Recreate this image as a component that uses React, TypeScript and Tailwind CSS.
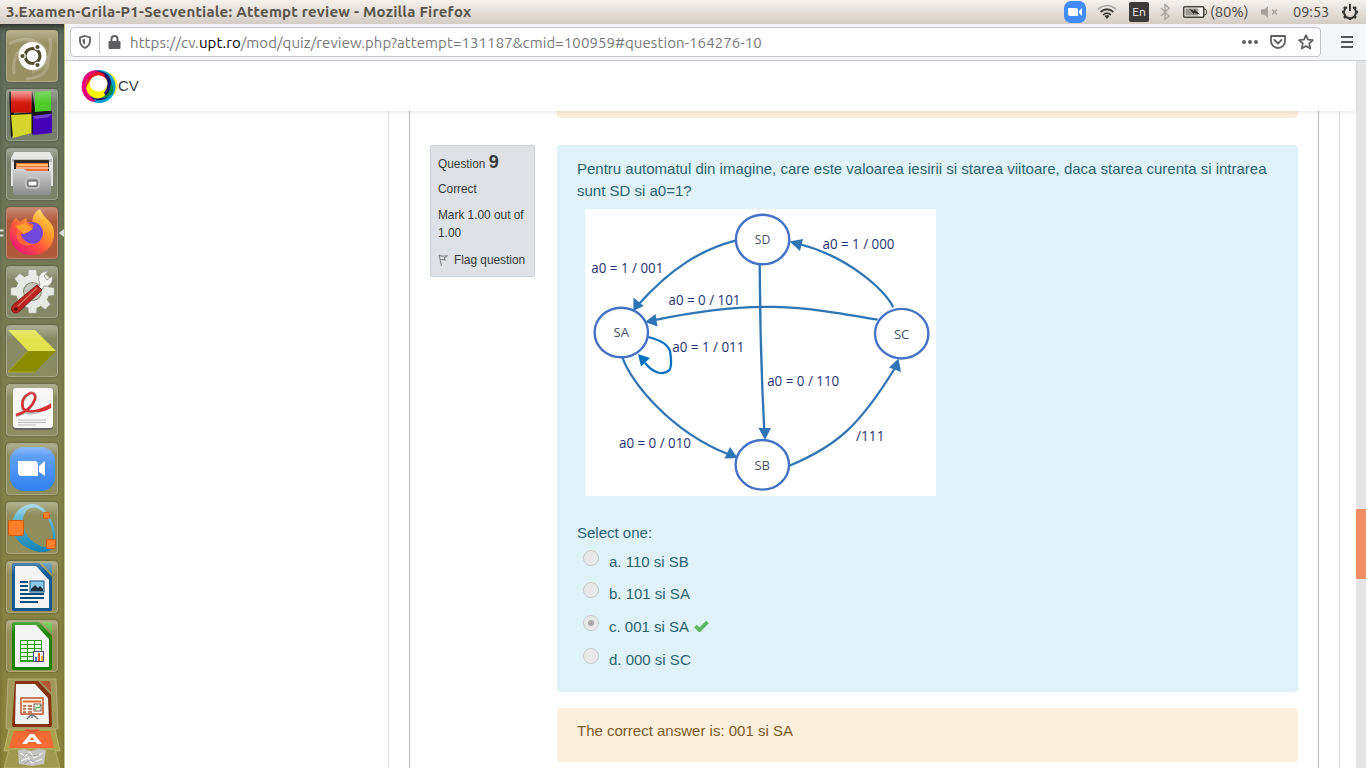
import type { ReactNode } from 'react';

const UBUNTU = "font-['Ubuntu','Noto_Sans',sans-serif]";

function Tile({ children, bg = 'bg-white/10' }: { children: ReactNode; bg?: string }) {
  return (
    <div className={`h-[52px] w-[52px] shrink-0 rounded-[4px] border border-white/25 shadow-[0_0_2px_rgba(0,0,0,0.5)] ${bg}`}>
      <svg className="-m-px block" width="52" height="52" viewBox="0 0 52 52">
        {children}
        <rect x="1" y="1" width="50" height="13" rx="3" fill="url(#gloss)" />
      </svg>
    </div>
  );
}

function Doc({ color, light, children }: { color: string; light: string; children: ReactNode }) {
  return (
    <>
      <path d="M8 2H33L46 16V48Q46 50 44 50H8Q6 50 6 48V4Q6 2 8 2Z" fill={color} />
      <path d="M9 5H30L43 19V47H9Z" fill="#f3f3f3" />
      <path d="M36 2H44Q46 2 46 4V13Z" fill={light} opacity=".85" />
      {children}
    </>
  );
}

function Launcher() {
  return (
    <aside className="relative flex w-[65px] shrink-0 flex-col items-center gap-[7px] overflow-hidden border-r border-[#c6c688] bg-linear-to-b from-[#5f6b5c] via-[#7f8050] to-[#8c8438] pt-[6px] pr-0 shadow-[inset_0_6px_6px_-3px_rgba(20,20,10,0.7)]">
      <svg width="0" height="0" className="absolute">
        <defs>
          <linearGradient id="gloss" x1="0" y1="0" x2="0" y2="1"><stop offset="0" stopColor="#fff" stopOpacity=".3" /><stop offset="1" stopColor="#fff" stopOpacity="0" /></linearGradient>
          <linearGradient id="steel" x1="0" y1="0" x2="0" y2="1"><stop offset="0" stopColor="#d2d2d2" /><stop offset="1" stopColor="#8d8d8d" /></linearGradient>
          <linearGradient id="fire" x1="1" y1="0" x2=".2" y2="1"><stop offset="0" stopColor="#fff14d" /><stop offset=".4" stopColor="#ff9a2b" /><stop offset=".7" stopColor="#ff4a3f" /><stop offset="1" stopColor="#e8147e" /></linearGradient>
          <linearGradient id="blue" x1="0" y1="0" x2="0" y2="1"><stop offset="0" stopColor="#6aa7f8" /><stop offset="1" stopColor="#3080f2" /></linearGradient>
          <linearGradient id="cyan" x1="0" y1="0" x2="0" y2="1"><stop offset="0" stopColor="#8fd0e0" /><stop offset="1" stopColor="#0d82b5" /></linearGradient>
          <linearGradient id="red" x1="0" y1="0" x2="0" y2="1"><stop offset="0" stopColor="#ef7f77" /><stop offset=".5" stopColor="#d81d12" /><stop offset="1" stopColor="#c81006" /></linearGradient>
        </defs>
      </svg>
      <Tile bg="bg-[#989163]">
        <g fill="none" stroke="#fff" opacity=".2" strokeWidth="3"><path d="M3 14Q25 2 40 20M8 44Q5 20 26 12M44 8Q48 36 26 42M20 49Q45 48 42 25" /></g>
        <circle cx="26.500" cy="26" r="14" fill="#fff" />
        <circle cx="26.500" cy="26" r="7.500" fill="none" stroke="#4f4b2b" strokeWidth="3.200" />
        <g fill="#4f4b2b" stroke="#fff" strokeWidth="1.200"><circle cx="16.500" cy="26" r="2.700" /><circle cx="31.500" cy="17" r="2.700" /><circle cx="31.500" cy="35" r="2.700" /></g>
      </Tile>
      <Tile>
        <path d="M3 3L8 2V45L5 49ZM26 2L30 25L25 26ZM5 25L28 23V28L6 29ZM25 22L46 22V27L28 30V46L25 44Z" fill="#171513" />
        <path d="M5 2H25.500V23.500H5Z" fill="url(#red)" /><path d="M29 3L45 2V21.500L29 23Z" fill="#4dcc2a" />
        <path d="M5 26L25.500 25V44L7 49Z" fill="#d5d52c" /><path d="M27 27L46 25V44L27 46Z" fill="#4500b5" /><path d="M27 27L46 24.500L43 28L29 30Z" fill="#7046cf" />
      </Tile>
      <Tile>
        <path d="M8 4H44L47 10V38H5V10Z" fill="#e3e3e1" /><path d="M6 11H46V14H6Z" fill="#b9b9b7" />
        <path d="M8 12H43V24H8Z" fill="#2c2826" /><path d="M10 15H42V24H10Z" fill="#ed7437" /><path d="M11 17H42" stroke="#ffd77b" strokeWidth="1.500" fill="none" /><path d="M10 20H43" stroke="#ffefdb" />
        <path d="M7 21H18L21 23H45V44Q45 47 42 47H10Q7 47 7 44Z" fill="url(#steel)" />
        <rect x="20" y="30" width="13" height="10" rx="2" fill="#999" stroke="#ddd" /><rect x="22" y="33" width="9" height="5" rx="1" fill="#fff" stroke="#555" />
      </Tile>
      <Tile bg="bg-[#b05a3c]">
        <path d="M26 48C13 48 4 39 4 27C4 20 6 14 10 11L14 15L20 11L21 15H26Q27 5 34 2Q37 9 43 14Q49 20 48 29C47 41 37 48 26 48Z" fill="url(#fire)" />
        <circle cx="26" cy="26" r="11" fill="#7049dc" /><path d="M13 18Q22 14 28 18L26 22Q22 27 14 27Q18 36 27 37Q20 41 14 36Q7 29 13 18Z" fill="#ff643b" /><path d="M9 19L20 16L27 22L18 27Z" fill="#ffa02d" />
      </Tile>
      <Tile>
        <g fill="#e7e9e5" stroke="#b8bcb5" strokeWidth=".5">
          {[0, 45, 90, 135, 180, 225, 270, 315].map((a) => <path key={a} d="M22 11L23 4H30L31 11Z" transform={`rotate(${a} 26.5 25.5)`} />)}
        </g>
        <circle cx="26.500" cy="25.500" r="13" fill="none" stroke="#e7e9e5" strokeWidth="7" />
        <circle cx="26.500" cy="25.500" r="8.500" fill="#c1c5bd" />
        <path d="M32 23L34 18Q30 10 37 6L42 5L38 10L41 14L46 10Q48 17 42 20L38 20L35 26Z" fill="#f4f4f2" stroke="#8b8d89" strokeWidth=".8" />
        <path d="M31 19L36 24L14 45Q9 49 6 45Q4 42 8 38Z" fill="#b82621" stroke="#771413" strokeWidth=".8" /><path d="M31 22L12 40" stroke="#df6c61" strokeWidth="1.500" /><circle cx="10" cy="43" r="1.800" fill="#5c1110" />
      </Tile>
      <Tile>
        <path d="M2 5H29L50 26H22Z" fill="#e2e24d" /><path d="M22 26H50L29 47H2Z" fill="#8c8c00" /><path d="M22 26L2 47H29" fill="none" stroke="#b3b31c" strokeWidth=".7" />
      </Tile>
      <Tile>
        <rect x="7" y="4" width="40" height="42" rx="3" fill="#666" /><rect x="7" y="4" width="40" height="40" rx="3" fill="#f7f7f7" />
        <path d="M10 32Q23 28 29 16Q31 8 24 9Q14 15 17 26Q23 34 45 22" fill="none" stroke="#b9bcc0" strokeWidth="3" /><path d="M10 31Q25 27 29 15Q30 8 24 9Q14 14 17 24Q23 32 45 21" fill="none" stroke="#d92d31" strokeWidth="2.400" /><path d="M25 27Q35 28 45 19V24Q35 30 25 27Z" fill="#d92d31" />
        <path d="M12 36H40M12 38.500H40M12 41H30" stroke="#bbb" strokeWidth="1" />
      </Tile>
      <Tile>
        <rect x="4" y="4" width="45" height="44" rx="14" fill="url(#blue)" /><path d="M12 18H28Q32 18 32 22V33H16Q12 33 12 29ZM33 23L39 18V33L33 29Z" fill="#fff" />
      </Tile>
      <Tile>
        <path d="M6 22C8 8 18 2 28 2C42 4 52 26 49 42C46 52 34 51 26 48C14 43 5 34 6 22ZM17 20C17 32 28 44 40 45C45 45 48 38 46.500 31C44 16 36 6 28 5.500C21 5.500 17 11 17 20Z" fillRule="evenodd" fill="url(#cyan)" />
        <g fill="#ff7f2a" stroke="#d85505"><rect x="2.500" y="18.500" width="15" height="15" rx="1.500" /><rect x="37.500" y="10.500" width="6" height="6" rx="1" /><rect x="40.500" y="37.500" width="9" height="9" rx="1" /></g>
      </Tile>
      <Tile>
        <Doc color="#0b5790" light="#3284c0"><path d="M14 21H22M14 25H22M14 29H22M14 33H38M14 37H38M14 41H32" stroke="#064c7d" strokeWidth="1.800" /><rect x="24" y="20" width="14" height="11" fill="#8acbed" stroke="#185274" /><path d="M25 30V28L29 24L32 27L34 25L37 28V30Z" fill="#22313d" /></Doc>
      </Tile>
      <Tile>
        <Doc color="#158400" light="#4fc52f"><path d="M14 20H36V42H14Z" fill="#2c9d18" /><g fill="#e5f7e0">{[0, 1, 2, 3, 4].flatMap((r) => [0, 1, 2].map((c) => <rect key={`${r}${c}`} x={15 + c * 7} y={21 + r * 4} width="6" height="3" />))}</g><rect x="27.500" y="31.500" width="10" height="10" fill="#fff" stroke="#4a4a6a" /><path d="M30 41V37" stroke="#2c7ac4" strokeWidth="2" /><path d="M33 41V33" stroke="#e35317" strokeWidth="2" /><path d="M36 41V36" stroke="#e8b423" strokeWidth="2" /></Doc>
      </Tile>
      <svg className="-mt-[2px] shrink-0" width="60" height="95" viewBox="2 675 60 95">
        <path d="M10 723H54L60 749H4Z" fill="#aaa34e" stroke="#cdc68a" strokeWidth=".6" />
        <path d="M14 729H50L54 746H9Z" fill="#f46a35" />
        <path d="M30 732H34L42 742H37L36 740H28L27 742H22ZM32 735L34.500 738H29.500Z" fill="#fff" fillRule="evenodd" />
        <path d="M25 727Q32 731 39 727" fill="none" stroke="#e65432" strokeWidth="3" />
        <path d="M9 747H55L60 766H4Z" fill="#a19b52" stroke="#c5c07d" strokeWidth=".6" />
        <path d="M18 748L24 747L31 749L38 747L46 748L44 762L32 764L19 762Z" fill="#c4c4c2" />
        <path d="M20 751L25 754L30 750L34 756L43 751M21 759L28 756L32 761L42 757" stroke="#eee" strokeWidth="1.300" fill="none" /><path d="M22 756L27 751L32 754L39 753M24 762L30 758L37 761" stroke="#9c9c98" strokeWidth=".8" fill="none" />
        <path d="M8 677H56L58 726Q58 727 56 727H8Q6 727 6 725Z" fill="#a0995a" stroke="#bdb784" strokeWidth=".8" />
        <path d="M15 679H38L51 693L52 723Q52 725 50 725H14Q12 725 12 723Z" fill="#86310f" />
        <path d="M16 682H35L48 696L49 722H15Z" fill="#f3f3f3" /><path d="M40 679H49Q51 679 51 690Z" fill="#ae5730" />
        <rect x="21" y="696" width="22" height="16" fill="#fff2e9" stroke="#b9562d" strokeWidth="1.500" /><path d="M23 699.500H41" stroke="#d9712f" strokeWidth="2" /><path d="M23 704H26M28 704H32M23 707H26M28 707H32M23 710H26M28 710H32" stroke="#a5532e" strokeWidth="1.500" /><rect x="34" y="702" width="7" height="7" fill="#e9ffe5" stroke="#7b5b50" /><path d="M35 708L37 705L39 706L41 703" stroke="#219729" fill="none" /><path d="M27 717L31 713H33L38 717M32 712V716" stroke="#777" strokeWidth="1.500" fill="none" />
      </svg>
      <svg className="absolute top-[202px] left-0" width="65" height="14" viewBox="0 0 65 14"><path d="M0 4.500H3.500M0 9.500H3.500" stroke="#ddd" strokeWidth="2" fill="none" /><path d="M64 3V11L59 7Z" fill="#ddd" /></svg>
    </aside>
  );
}

function SystemBar() {
  return (
    <header className={`flex h-6 shrink-0 items-center bg-linear-to-b from-[#f5f2ee] to-[#d5cdc4] pl-[6px] text-[#4c4841] ${UBUNTU}`}>
      <h1 className="w-[1058px] text-[15px] leading-6 font-bold tracking-[0.22px] whitespace-nowrap text-[#59544c]">3.Examen-Grila-P1-Secventiale: Attempt review - Mozilla Firefox</h1>
      <svg width="22" height="22" viewBox="0 0 22 22"><rect width="22" height="22" rx="7" fill="#428bfa" /><path d="M4 7H12Q14 7 14 9V15H6Q4 15 4 13ZM15 10L18 7V15L15 12Z" fill="#fff" /></svg>
      <svg className="ml-[11px]" width="20" height="16" viewBox="0 0 20 16" fill="none"><path d="M1 5Q10-2 19 5" stroke="#aaa5a0" strokeWidth="1.700" /><path d="M3.500 8Q10 2.500 16.500 8M6 11Q10 7 14 11" stroke="#3d3b37" strokeWidth="1.700" /><path d="M7.500 12Q10 10 12.500 12L10 15Z" fill="#3d3b37" /></svg>
      <span className="ml-3 flex h-5 w-5 items-center justify-center rounded-[2px] bg-[#3c3b39] text-[12px] text-[#f5f3ef]">En</span>
      <svg className="ml-[10px]" width="12" height="18" viewBox="0 0 12 18"><path d="M2 5L10 13L6 16.500V1.500L10 5L2 13" fill="none" stroke="#aba69f" strokeWidth="1.400" /></svg>
      <svg className="ml-3" width="24" height="14" viewBox="0 0 24 14"><rect x=".75" y="1.750" width="20" height="10.500" rx="1" fill="#f4f1ed" stroke="#45423d" strokeWidth="1.500" /><path d="M2.500 3.500H15V10.500H2.500Z" fill="#9b9791" /><path d="M21 4H22Q23.500 4 23.500 7T22 10H21" fill="none" stroke="#45423d" /><path d="M6 3.500L11 6V4L17 9.500L11 8V9.500Z" fill="#34322f" /></svg>
      <span className="ml-[3px] w-[40px] text-[15px] tracking-[-0.1px]">(80%)</span>
      <svg className="ml-[11px]" width="18" height="12" viewBox="0 0 18 12"><path d="M0 3.500H3L7 .5V11.500L3 8.500H0Z" fill="#a6a19a" /><path d="M11 3.500L16 8.500M16 3.500L11 8.500" stroke="#a6a19a" strokeWidth="1.500" /></svg>
      <span className="ml-[14px] w-[38px] text-[14.500px]">09:53</span>
      <svg className="ml-[11px]" width="16" height="18" viewBox="0 0 16 18" fill="none" stroke="#393733"><path d="M5 4A6 6 0 1 0 11 4" strokeWidth="2" /><path d="M8 1V8" strokeWidth="2" /><path d="M2 4L4 6M14 4L12 6M0 9H2M16 9H14M2 15L4 13M14 15L12 13M8 17V15" strokeWidth="2.500" /></svg>
    </header>
  );
}

function Toolbar() {
  return (
    <div className="flex h-[37px] shrink-0 items-start border-b border-[#ccc] bg-[#f5f6f8] pt-[3px] pl-[5px]">
      <div className="flex h-[30px] w-[1251px] items-center rounded-[4px] border border-[#c5c5c7] bg-white pl-2 text-[#5f5f62]">
        <svg width="12" height="14" viewBox="0 0 12 14"><path d="M6 1L11 2.500V6Q11 10.500 6 13Q1 10.500 1 6V2.500Z" fill="none" stroke="currentColor" strokeWidth="1.800" /><path d="M6 4V10Q3.500 8 3.500 6V4.500Z" fill="currentColor" /></svg>
        <span className="ml-2 h-[21px] w-px bg-[#c9c9cb]" />
        <svg className="ml-2" width="13" height="14" viewBox="0 0 13 14"><path d="M3.500 7V4A3 3 0 0 1 9.500 4V7" fill="none" stroke="currentColor" strokeWidth="2" /><rect x=".5" y="6" width="12" height="8" rx="1.300" fill="currentColor" /></svg>
        <span className={`ml-[9px] w-[1111px] pt-[2px] text-[15px] tracking-[0.08px] whitespace-nowrap text-[#77777a] ${UBUNTU}`}>https://cv.<span className="text-black">upt.ro</span>/mod/quiz/review.php?attempt=131187&amp;cmid=100959#question-164276-10</span>
        <svg className="shrink-0" width="18" height="6" viewBox="0 0 18 6" fill="currentColor"><circle cx="3" cy="3" r="2" /><circle cx="9" cy="3" r="2" /><circle cx="15" cy="3" r="2" /></svg>
        <svg className="ml-[11px] shrink-0" width="16" height="14" viewBox="0 0 16 14" fill="none" stroke="currentColor" strokeWidth="1.800" strokeLinejoin="round"><path d="M1 1H15V6A7 7 0 0 1 1 6Z" /><path d="M4.500 5L8 8.500L11.500 5" strokeLinecap="round" /></svg>
        <svg className="ml-3 shrink-0" width="16" height="16" viewBox="0 0 16 16"><path d="M8 1.200L10 5.700L15 6.200L11.200 9.500L12.300 14.600L8 12L3.700 14.600L4.800 9.500L1 6.200L6 5.700Z" fill="none" stroke="currentColor" strokeWidth="1.700" strokeLinejoin="round" /></svg>
      </div>
      <svg className="mt-[9px] ml-5" width="12" height="12" viewBox="0 0 12 12"><path d="M0 1H12M0 6H12M0 11H12" stroke="#555558" strokeWidth="2" /></svg>
    </div>
  );
}

const STATES = [
  { n: 'SD', x: 177.6, y: 30.5 }, { n: 'SA', x: 36.3, y: 123.5 }, { n: 'SC', x: 316.7, y: 124.7 }, { n: 'SB', x: 177.3, y: 255.8 },
];
const LABELS = [
  { t: 'a0 = 1 / 000', x: 237.5, y: 40.3, w: 72 }, { t: 'a0 = 1 / 001', x: 6.3, y: 64.3, w: 72 },
  { t: 'a0 = 0 / 101', x: 83.5, y: 96.2, w: 72 }, { t: 'a0 = 1 / 011', x: 87.3, y: 143, w: 72 },
  { t: 'a0 = 0 / 110', x: 182.2, y: 177.2, w: 72 }, { t: '/111', x: 271, y: 232.2, w: 28.5 }, { t: 'a0 = 0 / 010', x: 34, y: 239, w: 72 },
];

function Automaton() {
  return (
    <svg className="mt-[7px] ml-2 block bg-white font-['Open_Sans',sans-serif]" width="351" height="287" viewBox="0 0 351 287">
      <g fill="none" stroke="#2e75b6" strokeWidth="2.300">
        <path d="M150.300 31.700C115 41 85 60 53 96" />
        <path d="M308.300 98.300C300 82 265 48 214 35" />
        <path d="M292.700 110.700C215 97 170 90 68 111.300" />
        <path d="M174.700 56Q175 140 179.300 222" />
        <path d="M37.700 149C45 171 84 222 144 245.500" />
        <path d="M204.300 256.700C252 237 275 216 310 159" />
        <path d="M63.300 128C74 131 82 134 85 142C86 148 87 157 84.500 161C78 167 68 164 60 154" stroke="#0070c0" />
      </g>
      <g fill="#2e75b6">
        <path d="M48.300 102L48.500 88.500L58.700 97Z" /><path d="M204.500 32.500L218 30L215 42Z" /><path d="M60 113L70.500 105L72.500 117.500Z" />
        <path d="M180 231L173.500 219H186Z" /><path d="M152.800 249L139.500 249.500L145 238Z" /><path d="M313.500 149.500L316 163L304 158.500Z" />
        <path d="M53 145L65 149L56 157.500Z" fill="#0070c0" />
      </g>
      {STATES.map((s) => (
        <g key={s.n}>
          <ellipse cx={s.x} cy={s.y} rx="26.700" ry="24.800" fill="#fff" stroke="#4472c4" strokeWidth="2.400" />
          <text x={s.x - 7.8} y={s.y + 4.8} fontSize="13.300" textLength="15.500" lengthAdjust="spacingAndGlyphs" fill="#44546a">{s.n}</text>
        </g>
      ))}
      {LABELS.map((l) => (
        <text key={l.t} x={l.x} y={l.y} fontSize="14.200" textLength={l.w} lengthAdjust="spacingAndGlyphs" fill="#1f3474">{l.t}</text>
      ))}
    </svg>
  );
}

const ANSWERS = [
  { t: 'a. 110 si SB', h: 'h-8' }, { t: 'b. 101 si SA', h: 'h-[33px]' }, { t: 'c. 001 si SA', h: 'h-[33px]', ok: true }, { t: 'd. 000 si SC', h: 'h-[33px]' },
];

function Question() {
  return (
    <section className="w-[741px]">
      <div className="h-[7px] rounded-b-[4px] bg-[#fcefdc]" />
      <div className="mt-[27px] h-[547px] rounded-[4px] bg-[#def2f8] px-5 pt-[13px] text-[15px] text-[#2f6473]">
        <p className="leading-[22px]">Pentru automatul din imagine, care este valoarea iesirii si starea viitoare, daca starea curenta si intrarea<br />sunt SD si a0=1?</p>
        <Automaton />
        <p className="mt-[26px] leading-[22px]">Select one:</p>
        <div className="mt-[6px] ml-[6px]">
          {ANSWERS.map((a) => (
            <div key={a.t} className={`flex items-start ${a.h}`}>
              <span className="flex h-4 w-4 items-center justify-center rounded-full border border-[#cacaca] bg-[#e9e9e9]">{a.ok && <span className="h-[6px] w-[6px] rounded-full bg-[#aaa]" />}</span>
              <span className="mt-[1px] ml-[10px] leading-[22px]">{a.t}</span>
              {a.ok && <svg className="mt-[5px] ml-[5px]" width="15" height="12" viewBox="0 0 15 12"><path d="M1.500 6L5.500 10L13.500 2" fill="none" stroke="#5cb85c" strokeWidth="3.800" /></svg>}
            </div>
          ))}
        </div>
      </div>
      <div className="mt-4 h-[54px] rounded-[4px] bg-[#fcefdc] px-5 pt-3 text-[15px] leading-[22px] text-[#7d5a29]">The correct answer is: 001 si SA</div>
    </section>
  );
}

function QuestionInfo() {
  return (
    <section className="mt-[34px] mr-[22px] ml-5 h-[132px] w-[105px] shrink-0 rounded-[2px] border border-[#cad0d7] bg-[#dee2e6] px-[7px] pt-[4px] text-[11.850px] text-[#373a3c]">
      <h3 className="h-6 leading-6">Question <b className="text-[18px]">9</b></h3>
      <p className="mt-[7px] leading-[17px]">Correct</p>
      <p className="mt-[8px] leading-[18px] whitespace-nowrap">Mark 1.00 out of<br />1.00</p>
      <p className="mt-[9px] flex items-center leading-[18px] whitespace-nowrap"><svg className="mr-[6px]" width="10" height="12" viewBox="0 0 10 12"><path d="M1 1L3.500 12M1 1Q3 3 9.500 1.500L6.500 4L7 6Q5 5 2 6" fill="none" stroke="#85888b" strokeWidth="1.100" /></svg>Flag question</p>
    </section>
  );
}

export default function App() {
  return (
    <div className="flex h-[768px] w-[1366px] flex-col overflow-hidden bg-white font-['Liberation_Sans',Arial,sans-serif]">
      <SystemBar />
      <div className="flex min-h-0 flex-1">
        <Launcher />
        <main className="flex min-w-0 flex-1 flex-col">
          <Toolbar />
          <div className="flex min-h-0 flex-1">
            <div className="flex w-[1291px] flex-col">
              <nav className="z-10 flex h-[50px] shrink-0 items-center bg-white pl-4 text-[15px] text-[#373a3c] shadow-[0_2px_4px_rgba(0,0,0,0.08)]">
                <svg width="37" height="36" viewBox="0 0 37 36">
                  <path d="M25 3Q38 8 36.500 20Q35 26 31 28Q37 14 25 3Z" fill="#fff04a" />
                  <circle cx="18" cy="18.500" r="16.500" fill="#00a0cf" />
                  <path d="M19 3Q9 0 3 9Q-3 22 6 31Q11 35 15 33Q8 29 7 19Q8 8 19 3Z" fill="#e6007e" />
                  <path d="M7 15Q9 5 18 3Q28 4 30 13Q32 23 26 30Q19 34 12 31L9 28Q27 30 27 15Q20 5 7 15Z" fill="#1b1270" />
                  <path d="M30 15Q34 21 31 26Q26 31 18 30L13 28Q27 27 30 15Z" fill="#008b3d" />
                  <ellipse cx="16.500" cy="18" rx="11.500" ry="12.500" fill="#fff200" />
                  <path d="M5 20Q5 6 16 4Q24 3 26 12Q18 4 11 10Q8 13 5 20Z" fill="#ef1027" />
                  <path d="M25 6Q34 17 25 28L23 25Q30 16 23 7Z" fill="#1b1270" />
                  <ellipse cx="17.500" cy="15.500" rx="8.800" ry="8" fill="#fff" />
                </svg>
                <span className="pt-[1px]">CV</span>
              </nav>
              <div className="flex min-h-0 flex-1">
                <div className="w-[324px] shrink-0 border-r border-[#dee2e6]" />
                <div className="ml-5 flex w-[910px] shrink-0 border-x border-[#b9b9b9]">
                  <QuestionInfo />
                  <Question />
                </div>
                <div className="ml-5 flex-1 border-l border-[#dcdcdc]" />
              </div>
            </div>
            <div className="w-[10px] bg-[#e5e5e5] pt-[448px]"><div className="h-[70px] rounded-[1px] bg-[#f08e66]" /></div>
          </div>
        </main>
      </div>
    </div>
  );
}
